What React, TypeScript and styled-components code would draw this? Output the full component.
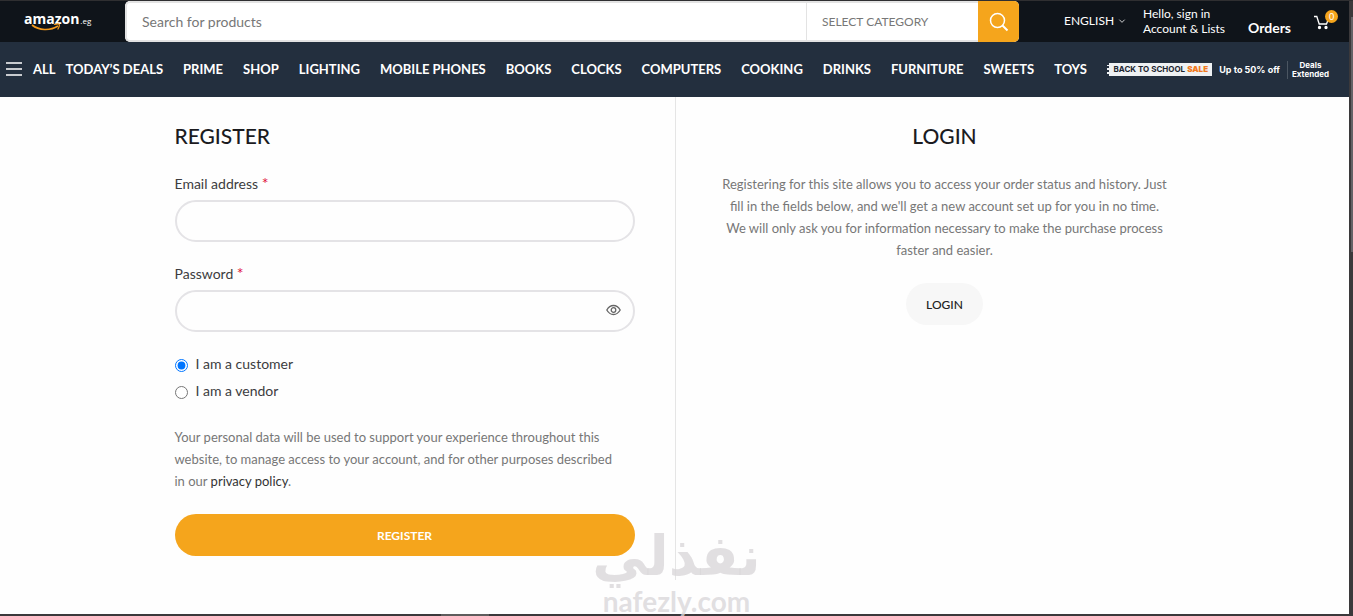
import React from "react";
import styled, { createGlobalStyle } from "styled-components";

const Global = createGlobalStyle`
  * { box-sizing: border-box; }
  body { margin: 0; background: #fefefe; font-family: Lato, "Liberation Sans", sans-serif; font-size: 14px; color: #777; }
  a { color: inherit; text-decoration: none; }
  button, input, select { font: inherit; color: inherit; }
  p, h2 { margin: 0; }
`;

const Shell = styled.div`
  display: grid;
  grid-template-columns: minmax(0, 1fr) 4px;
  grid-template-rows: 1fr 2px;
  min-height: 100vh;
  border-top: 1px solid #2f2f31;
  background: #3b393b;
`;

const Page = styled.div`
  position: relative;
  display: flex;
  flex-direction: column;
  background: #fefefe;
`;

const SideTrack = styled.div`
  padding-left: 2px;
  padding-top: 16px;
`;

const SideThumb = styled.div`
  height: 235px;
  background: #646266;
`;

const BottomTrack = styled.div`
  grid-column: 1 / -1;
  display: flex;
  justify-content: center;
  padding-right: 424px;
`;

const BottomThumb = styled.div`
  width: 48px;
  background: #5e5c5c;
`;

const TopBar = styled.header`
  display: flex;
  height: 41px;
  background: #0f141a;
  color: #fff;
`;

const Brand = styled.a`
  flex: none;
  display: flex;
  width: 125px;
  padding-left: 24px;
  padding-top: 8px;
`;

const BrandName = styled.span`
  position: relative;
  height: 22px;
  font: 700 14px/20px "Open Sans", sans-serif;

  svg { position: absolute; left: 7px; top: 14px; }
`;

const BrandRegion = styled.span`
  font: 8px/24px "Open Sans", sans-serif;
  padding-left: 1px;
`;

const Search = styled.form`
  flex: 1;
  display: flex;
  height: 41px;
  border-radius: 5px;
  overflow: hidden;
  background: #fff;
`;

const SearchInput = styled.input`
  flex: 1;
  min-width: 0;
  padding: 0 15px;
  border: 2px solid #e3e3e3;
  border-right: 0;
  border-radius: 5px 0 0 5px;
  background: #fff;
  outline: 0;
  color: #777;
  &::placeholder { color: #777; opacity: 1; }
`;

const CategoryBox = styled.div`
  position: relative;
  width: 172px;
  border: 2px solid #e3e3e3;
  border-width: 2px 0 2px 1px;

  svg { position: absolute; right: 14px; top: 12px; pointer-events: none; }
`;

const CategorySelect = styled.select`
  width: 100%;
  height: 100%;
  padding: 0 15px;
  border: 0;
  appearance: none;
  background: #fff;
  color: #777;
  font-size: 12px;
`;

const SearchButton = styled.button`
  display: grid;
  place-items: center;
  width: 41px;
  padding: 0;
  border: 0;
  background: #f5a51c;
  color: #fff;
`;

const Tools = styled.div`
  display: flex;
  width: 330px;
  padding-left: 45px;
`;

const Language = styled.button`
  display: flex;
  align-items: center;
  gap: 4px;
  width: 79px;
  height: 39px;
  padding: 0;
  border: 0;
  background: none;
  color: #fff;
  font-size: 12px;
`;

const Account = styled.a`
  width: 105px;
  padding-top: 5px;
  font-size: 12px;
  line-height: 15px;
  white-space: nowrap;
`;

const Orders = styled.a`
  width: 66px;
  padding-top: 18px;
  font-weight: 700;
  line-height: 18px;
`;

const Cart = styled.a`
  position: relative;
  width: 24px;
  padding-top: 13px;
`;

const CartCount = styled.span`
  position: absolute;
  right: 0;
  top: 9px;
  width: 13px;
  height: 13px;
  border-radius: 50%;
  background: #f5a51c;
  font-size: 9px;
  line-height: 13px;
  text-align: center;
`;

const NavBar = styled.nav`
  display: flex;
  align-items: center;
  height: 55px;
  padding: 0 20px 2px 6px;
  background: #232f3e;
  color: #fff;
  font-size: 13px;
  font-weight: 700;
  white-space: nowrap;
`;

const AllButton = styled.button`
  display: flex;
  align-items: center;
  gap: 11px;
  padding: 0;
  margin-right: 10px;
  border: 0;
  background: none;
  font-weight: 700;
`;

const NavList = styled.div`
  display: flex;
  gap: 20px;
`;

const Promo = styled.a`
  display: flex;
  align-items: center;
  margin-left: auto;
  padding-top: 2px;
  font-family: Inter, sans-serif;
  font-size: 9px;
  line-height: 9px;
`;

const PromoTag = styled.span`
  display: flex;
  justify-content: center;
  gap: 2px;
  width: 105px;
  border-left: 2px dotted #232f3e;
  background: #eef1f3;
  color: #1c2530;
  font-size: 8px;
  line-height: 13px;

  b { color: #f07a22; }
`;

const PromoText = styled.span`
  padding: 0 7px;
`;

const PromoEnd = styled.span`
  padding-left: 4px;
  border-left: 1px solid #4b5662;
  font-size: 8px;
  text-align: center;
  line-height: 9px;
`;

const Columns = styled.main`
  display: grid;
  grid-template-columns: 1fr 1fr;
  width: 100%;
  max-width: 1000px;
  min-height: 483px;
  margin: 0 auto 33px;
`;

const RegisterForm = styled.form`
  display: flex;
  flex-direction: column;
  padding: 25px 40px 24px 0;
`;

const LoginPanel = styled.section`
  display: flex;
  flex-direction: column;
  align-items: center;
  padding: 25px 0 24px 39px;
  border-left: 1px solid #e5e5e5;
  text-align: center;
`;

const Title = styled.h2`
  margin-bottom: 23px;
  color: #1b1b1f;
  font-size: 21px;
  font-weight: 500;
  line-height: 28px;
`;

const Field = styled.div`
  display: flex;
  flex-direction: column;
  gap: 5px;
  margin-bottom: 21px;
`;

const FieldLabel = styled.label`
  color: #3c3c40;
  line-height: 22px;

  span { color: #e0143c; font-size: 16px; line-height: 16px; }
`;

const InputBox = styled.div`
  position: relative;
  height: 42px;
`;

const TextInput = styled.input`
  width: 100%;
  height: 100%;
  padding: 0 45px 0 15px;
  border: 2px solid #e4e3e6;
  border-radius: 21px;
  background: transparent;
  outline: 0;
`;

const RevealButton = styled.button`
  position: absolute;
  right: 14px;
  top: 13px;
  display: flex;
  padding: 0;
  border: 0;
  background: none;
`;

const Roles = styled.div`
  display: flex;
  flex-direction: column;
  gap: 5px;
  margin-bottom: 24px;
`;

const Role = styled.label`
  display: flex;
  align-items: center;
  gap: 8px;
  color: #3c3c40;
  line-height: 22px;

  input { width: 13px; height: 13px; margin: 2px 0 0; accent-color: #0075ff; }
`;

const Copy = styled.p`
  margin-bottom: 22px;
  font-size: 13px;
  line-height: 22px;
  a { color: #333; }
`;

const Pill = styled.button<{ $primary?: boolean }>`
  height: 42px;
  padding: 0 20px;
  border: 0;
  border-radius: 21px;
  background: ${(p) => (p.$primary ? "#f5a51c" : "#f7f7f7")};
  color: ${(p) => (p.$primary ? "#fff" : "#222")};
  font-size: 12px;
  font-weight: ${(p) => (p.$primary ? 700 : 500)};
`;

const Watermark = styled.div`
  position: absolute;
  left: 50%;
  bottom: 0;
  width: 170px;
  margin-left: -83px;
  color: rgba(217, 215, 218, 0.8);
  font-weight: 700;
  text-align: center;
  white-space: nowrap;
  pointer-events: none;
`;

const WatermarkArabic = styled.div`
  font-family: "DejaVu Sans", sans-serif;
  font-size: 55px;
  line-height: 64px;
`;

const WatermarkLatin = styled.div`
  font-size: 28px;
  line-height: 26px;
`;

const links = ["TODAY’S DEALS", "PRIME", "SHOP", "LIGHTING", "MOBILE PHONES", "BOOKS", "CLOCKS", "COMPUTERS", "COOKING", "DRINKS", "FURNITURE", "SWEETS", "TOYS"];

const Chevron = ({ size }: { size: number }) => (
  <svg width={size} height={size} viewBox="0 0 12 12" fill="none" stroke="currentColor" strokeWidth="1.2">
    <path d="M2 4l4 4 4-4" />
  </svg>
);

export default function App() {
  return (
    <Shell>
      <Global />
      <Page>
        <TopBar>
          <Brand href="#">
            <BrandName>
              amazon
              <svg width="32" height="9" viewBox="0 0 32 9" fill="none" stroke="#f59a1c">
                <path d="M1 2C8 7.500 19 8 27 3" strokeWidth="1.600" />
                <path d="M23 1.500c3-.8 5-.8 5.300 0s-.4 3-1.600 5" strokeWidth="1.200" />
              </svg>
            </BrandName>
            <BrandRegion>.eg</BrandRegion>
          </Brand>
          <Search>
            <SearchInput type="text" placeholder="Search for products" aria-label="Search for products" />
            <CategoryBox>
              <CategorySelect aria-label="Category">
                <option>SELECT CATEGORY</option>
              </CategorySelect>
              <Chevron size={12} />
            </CategoryBox>
            <SearchButton type="button" aria-label="Search">
              <svg width="20" height="20" viewBox="0 0 20 20" fill="none" stroke="currentColor" strokeWidth="1.500">
                <circle cx="8.500" cy="8.500" r="7" />
                <path d="M13.500 13.500l5 5" strokeWidth="2" />
              </svg>
            </SearchButton>
          </Search>
          <Tools>
            <Language type="button">
              ENGLISH
              <Chevron size={8} />
            </Language>
            <Account href="#">
              Hello, sign in
              <br />
              Account &amp; Lists
            </Account>
            <Orders href="#">Orders</Orders>
            <Cart href="#" aria-label="Cart">
              <svg width="15" height="16" viewBox="0 0 15 16" fill="none" stroke="currentColor" strokeWidth="1.300">
                <path d="M0 2.500h2.800l2.400 7.500h7.300l1.500-4" />
                <circle cx="5.500" cy="13.500" r="1" fill="currentColor" />
                <circle cx="12" cy="13.500" r="1" fill="currentColor" />
              </svg>
              <CartCount>0</CartCount>
            </Cart>
          </Tools>
        </TopBar>
        <NavBar>
          <AllButton type="button">
            <svg width="16" height="14" viewBox="0 0 16 14" stroke="currentColor" strokeWidth="1.500">
              <path d="M0 1h16M0 7h16M0 13h16" />
            </svg>
            ALL
          </AllButton>
          <NavList>
            {links.map((l) => (
              <a href="#" key={l}>{l}</a>
            ))}
          </NavList>
          <Promo href="#">
            <PromoTag>
              <span>BACK TO SCHOOL</span>
              <b>SALE</b>
            </PromoTag>
            <PromoText>Up to 50% off</PromoText>
            <PromoEnd>
              Deals
              <br />
              Extended
            </PromoEnd>
          </Promo>
        </NavBar>
        <Columns>
          <RegisterForm>
            <Title>REGISTER</Title>
            <Field>
              <FieldLabel htmlFor="email">Email address <span>*</span></FieldLabel>
              <InputBox>
                <TextInput id="email" type="email" />
              </InputBox>
            </Field>
            <Field>
              <FieldLabel htmlFor="password">Password <span>*</span></FieldLabel>
              <InputBox>
                <TextInput id="password" type="password" />
                <RevealButton type="button" aria-label="Show password">
                  <svg width="15" height="14" viewBox="0 0 15 14" fill="none" stroke="#666" strokeWidth="1.300">
                    <path d="M.8 7C2.500 4 4.800 2.500 7.500 2.500S12.500 4 14.200 7C12.500 10 10.200 11.500 7.500 11.500S2.500 10 .8 7z" />
                    <circle cx="7.500" cy="7" r="2.300" />
                  </svg>
                </RevealButton>
              </InputBox>
            </Field>
            <Roles>
              <Role><input type="radio" name="role" defaultChecked />I am a customer</Role>
              <Role><input type="radio" name="role" />I am a vendor</Role>
            </Roles>
            <Copy>
              Your personal data will be used to support your experience throughout this
              <br />
              website, to manage access to your account, and for other purposes described
              <br />
              in our <a href="#">privacy policy</a>.
            </Copy>
            <Pill $primary type="button">REGISTER</Pill>
          </RegisterForm>
          <LoginPanel>
            <Title>LOGIN</Title>
            <Copy>
              Registering for this site allows you to access your order status and history. Just
              <br />
              fill in the fields below, and we'll get a new account set up for you in no time.
              <br />
              We will only ask you for information necessary to make the purchase process
              <br />
              faster and easier.
            </Copy>
            <Pill type="button">LOGIN</Pill>
          </LoginPanel>
        </Columns>
        <Watermark>
          <WatermarkArabic lang="ar" dir="rtl">نفذلي</WatermarkArabic>
          <WatermarkLatin>nafezly.com</WatermarkLatin>
        </Watermark>
      </Page>
      <SideTrack><SideThumb /></SideTrack>
      <BottomTrack><BottomThumb /></BottomTrack>
    </Shell>
  );
}
